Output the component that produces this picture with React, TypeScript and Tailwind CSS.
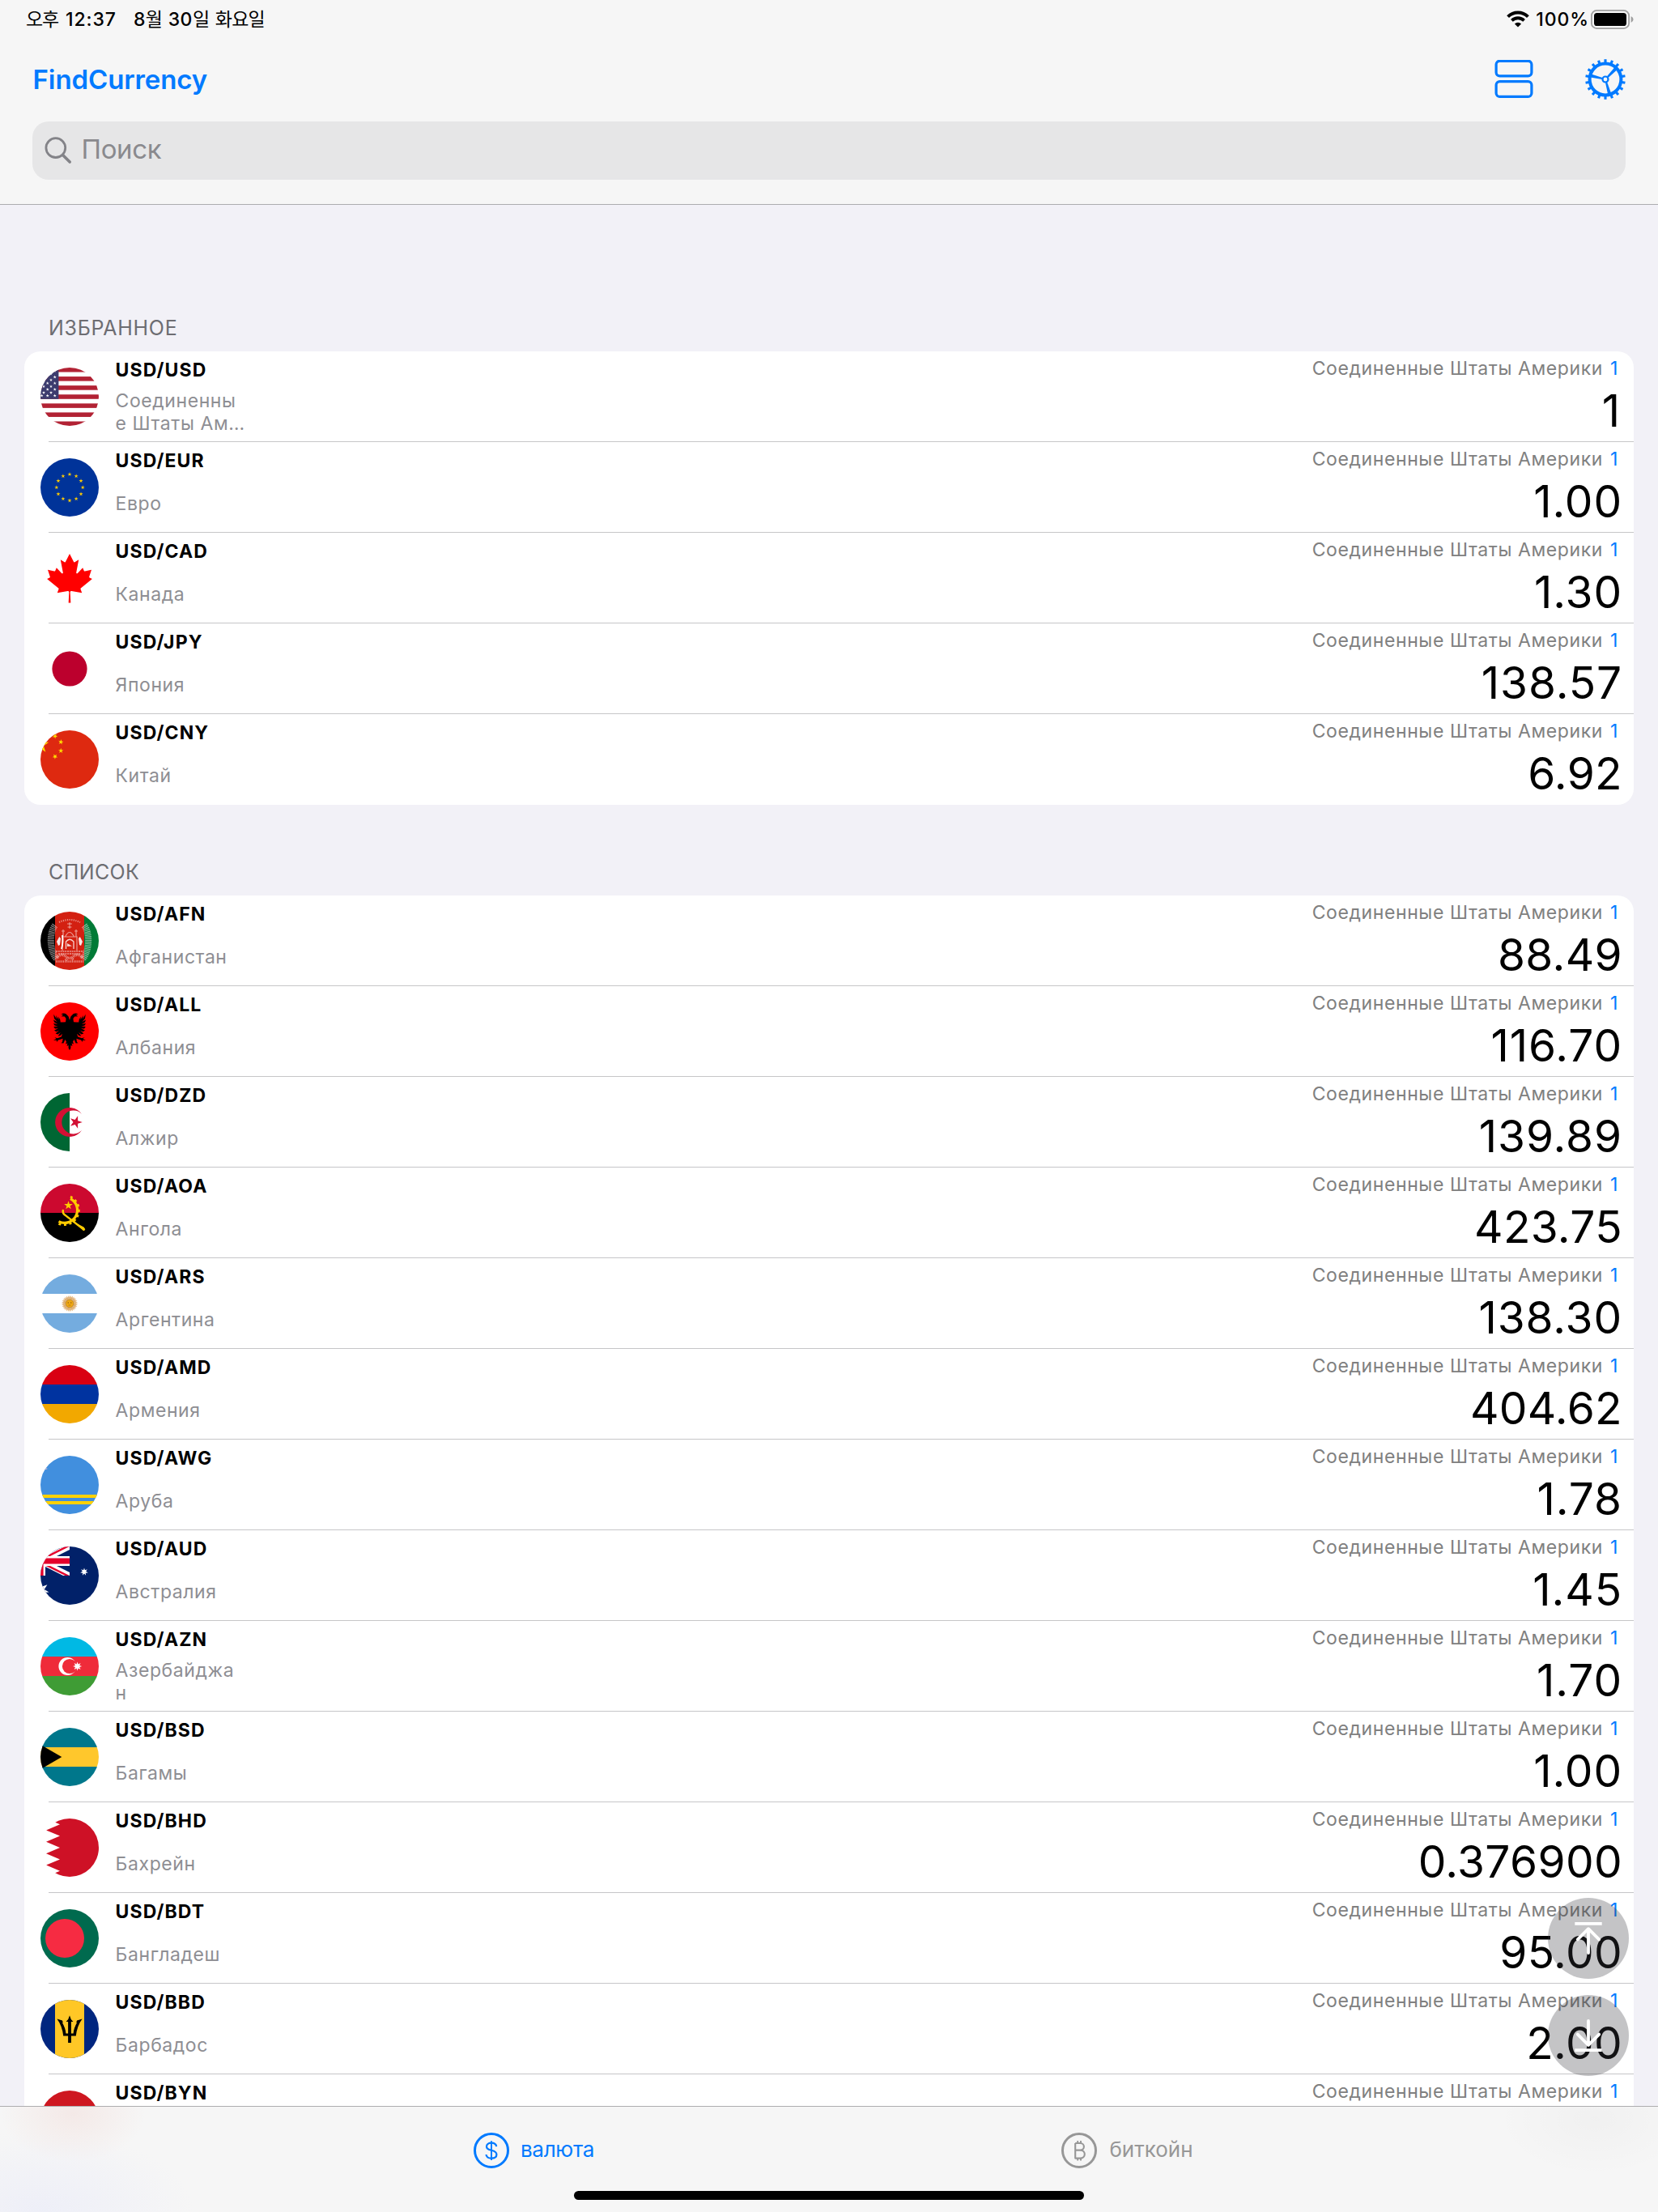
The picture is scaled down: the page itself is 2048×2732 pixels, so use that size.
import React from "react";

function starPoints(cx: number, cy: number, r: number, n = 5, ratio = 0.382, rot = -90) {
  const pts: string[] = [];
  for (let i = 0; i < n * 2; i++) {
    const a = ((rot + (i * 180) / n) * Math.PI) / 180;
    const q = i % 2 === 0 ? r : r * ratio;
    pts.push(`${(cx + q * Math.cos(a)).toFixed(2)},${(cy + q * Math.sin(a)).toFixed(2)}`);
  }
  return pts.join(" ");
}

type StarProps = { x: number; y: number; r: number; n?: number; ratio?: number; rot?: number; fill?: string };

function Star({ x, y, r, n, ratio, rot, fill = "#fff" }: StarProps) {
  return <polygon points={starPoints(x, y, r, n, ratio, rot)} fill={fill} />;
}

function Bands({ colors }: { colors: string[] }) {
  return (
    <>
      {colors.map((c, i) => (
        <rect key={i} x="0" y={i * 24} width="72" height="24" fill={c} />
      ))}
    </>
  );
}

const usStars = [
  [17.7, 11.7], [13, 15.3], [17.7, 19.3], [8.7, 19.3], [13, 23.3], [4, 23.3], [17.7, 27],
  [8.7, 27], [13, 31], [4, 31], [17.7, 34.7], [8.7, 34.7], [1.5, 34.7], [17.7, 4], [13, 7.7],
];

const eagleHalf =
  "M36 22 L34.6 17.5 L31.5 14.2 Q28 12.6 25.6 14.8 L28.2 15.4 L25.6 17.2 L29.8 17.6 L31.6 20 L31 24.5 L25 25.5 L24.2 21 L22 17.6 L22.6 21.5 L19.2 16 L20 20.6 L16.2 14.8 L17 20 L20.6 24 L16 21.6 L17 24.6 L21.2 27 L16 26 L17.4 28.6 L21.6 29.6 L16.2 30 L18 32.4 L22 32.2 L17 34.6 L19.4 36.2 L23 34.8 L18.6 38.6 L21.4 39.4 L24.8 37 L21.6 41.6 L24.4 41.2 L27 38.8 L25.8 42.4 L21 44.2 L17.4 43.2 L19.6 45 L16 47 L19.8 46.8 L20 49 L22 46.6 L25.4 45.6 L27.6 44.8 L27 49 L25.4 50.2 L28.4 50.4 L30.4 46 L32 48.4 L31 51.4 L33.4 50.6 L32.6 54 L34.6 53 L34.6 56.4 L36 59 Z";

const flags: Record<string, React.ReactNode> = {
  USD: (
    <>
      <rect width="72" height="72" fill="#fff" />
      {[0, 2, 4, 6, 8, 10, 12].map((i) => (
        <rect key={i} y={i * 5.54} width="72" height="5.54" fill="#b22234" />
      ))}
      <rect width="22.4" height="38.8" fill="#3c3b6e" />
      {usStars.map(([x, y]) => (
        <Star key={`${x}-${y}`} x={x} y={y} r={2.1} />
      ))}
    </>
  ),
  EUR: (
    <>
      <rect width="72" height="72" fill="#003399" />
      {Array.from({ length: 12 }, (_, i) => (
        <Star
          key={i}
          x={36 + 16.2 * Math.sin((i * Math.PI) / 6)}
          y={36 - 16.2 * Math.cos((i * Math.PI) / 6)}
          r={2.7}
          fill="#ffcc00"
        />
      ))}
    </>
  ),
  CAD: (
    <>
      <rect width="72" height="72" fill="#fff" />
      <g transform="scale(.015) translate(-2400 0)">
        <path
          fill="#f00"
          d="m4890 4430-45-863a95 95 0 0 1 111-98l859 151-116-320a65 65 0 0 1 20-73l941-762-212-99a65 65 0 0 1-34-79l186-572-542 115a65 65 0 0 1-73-38l-105-247-423 454a65 65 0 0 1-111-57l204-1052-327 189a65 65 0 0 1-91-27l-332-652-332 652a65 65 0 0 1-91 27l-327-189 204 1052a65 65 0 0 1-111 57l-423-454-105 247a65 65 0 0 1-73 38l-542-115 186 572a65 65 0 0 1-34 79l-212 99 941 762a65 65 0 0 1 20 73l-116 320 859-151a95 95 0 0 1 111 98l-45 863z"
        />
      </g>
    </>
  ),
  JPY: (
    <>
      <rect width="72" height="72" fill="#fff" />
      <circle cx="36" cy="36" r="21.6" fill="#bc002d" />
    </>
  ),
  CNY: (
    <>
      <rect width="72" height="72" fill="#de2910" />
      <Star x={0} y={18} r={10.8} fill="#ffde00" />
      <Star x={18} y={7.2} r={3.4} rot={15} fill="#ffde00" />
      <Star x={25.2} y={14.4} r={3.4} rot={-80} fill="#ffde00" />
      <Star x={25.2} y={25.2} r={3.4} rot={-90} fill="#ffde00" />
      <Star x={18} y={32.4} r={3.4} rot={20} fill="#ffde00" />
    </>
  ),
  AFN: (
    <>
      <rect width="18" height="72" fill="#000" />
      <rect x="18" width="36" height="72" fill="#d32011" />
      <rect x="54" width="18" height="72" fill="#007a36" />
      <g fill="none" stroke="#fff">
        <path d="M18 17 C11 26 10.5 46 20 59" strokeWidth="8" strokeDasharray="1.2 .9" opacity=".5" />
        <path d="M54 17 C61 26 61.5 46 52 59" strokeWidth="8" strokeDasharray="1.2 .9" opacity=".5" />
        <path d="M23 13 Q36 7 49 13" strokeWidth="2.2" strokeDasharray="1.2 1.4" opacity=".5" />
        <path d="M33 15 h6 M36 13 v8 M33.5 19 h5" strokeWidth=".9" opacity=".6" />
        <path d="M27 48 V31 H45 V48 M30.5 31 Q36 20 41.5 31 M28 31 V22 M44 31 V22 M26 24 h4 M42 24 h4" strokeWidth="1.2" opacity=".55" />
        <path d="M31.5 46 V37 Q36 31.5 41 37 V46" strokeWidth="1.3" opacity=".8" />
        <path d="M27 29 q1.5 8 -1 17" strokeWidth="1.8" />
        <path d="M19 49 H53 M22 52 H50" strokeWidth="1.4" strokeDasharray="2 .8" opacity=".55" />
        <path d="M19 61.5 H53" strokeWidth="2.4" strokeDasharray="1.2 1" opacity=".5" />
        <path d="M20 56.5 Q27 50 33 57 M52 56.5 Q45 50 39 57 M31 60 Q36 54 41 60" strokeWidth="3.2" strokeDasharray="1.2 .8" opacity=".5" />
      </g>
      <path d="M20 37 l3.2 -6 l1.8 2 l-1 8 l-2 1 z M52 37 l-3.2 -6 l-1.8 2 l1 8 l2 1 z" fill="#fff" opacity=".9" />
      <path d="M33 43 v-4 l6 3.5 z" fill="#fff" opacity=".8" />
    </>
  ),
  ALL: (
    <>
      <rect width="72" height="72" fill="#f00" />
      <path d={eagleHalf} />
      <path d={eagleHalf} transform="translate(72 0) scale(-1 1)" />
      <rect x="25" y="24.5" width="22" height="12" />
    </>
  ),
  DZD: (
    <>
      <rect width="72" height="72" fill="#fff" />
      <rect width="36" height="72" fill="#006633" />
      <path d="M51 25.9 A18 18 0 1 0 51 46.1 A14.4 14.4 0 1 1 51 25.9 Z" fill="#d21034" />
      <Star x={43.6} y={36} r={8.2} rot={0} fill="#d21034" />
    </>
  ),
  AOA: (
    <>
      <rect width="72" height="36" fill="#cc092f" />
      <rect y="36" width="72" height="36" fill="#000" />
      <path d="M37 18.5 A15.2 15.2 0 1 1 22.5 46.6" fill="none" stroke="#ffcb00" strokeWidth="3.2" />
      <path d="M37 16 A17.5 17.5 0 1 1 21.5 49" fill="none" stroke="#ffcb00" strokeWidth="2.6" strokeDasharray="3 3.6" />
      <path d="M27.5 32.5 Q26 36 28.6 38.4 L50 54.6 L53 58 L55.4 56.2 L53.4 53.6 Q36 45 29.5 37 Z" fill="#ffcb00" />
      <path d="M27.8 33 Q27.2 36.4 30 38.4 L53.6 56.8" fill="none" stroke="#ffcb00" strokeWidth="2.4" strokeLinecap="round" />
      <Star x={34.5} y={26.8} r={5.6} fill="#ffcb00" />
    </>
  ),
  ARS: (
    <>
      <Bands colors={["#74acdf", "#ffffff", "#74acdf"]} />
      {[0, 1, 2, 3].map((k) => (
        <Star key={k} x={36} y={36} r={10.2} n={8} ratio={0.45} rot={k * 11.25} fill={k % 2 ? "#e0b67e" : "#dfa968"} />
      ))}
      <circle cx="36" cy="36" r="4.8" fill="#f0a811" stroke="#b07a1c" strokeWidth=".6" />
      <circle cx="34.2" cy="35" r=".7" fill="#85540f" />
      <circle cx="37.8" cy="35" r=".7" fill="#85540f" />
      <path d="M34.4 38 h3.2" stroke="#a5701a" strokeWidth=".7" />
    </>
  ),
  AMD: <Bands colors={["#d90012", "#0033a0", "#f2a800"]} />,
  AWG: (
    <>
      <rect width="72" height="72" fill="#418fde" />
      <rect y="48" width="72" height="4" fill="#ffd100" />
      <rect y="56" width="72" height="4" fill="#ffd100" />
      <path d="M4 14.6 L9 16 L4 17.4 Z" fill="#f4c9d2" />
    </>
  ),
  AUD: (
    <>
      <rect width="72" height="72" fill="#012169" />
      <svg x="-36" y="0" width="72" height="36" viewBox="0 0 72 36">
        <path d="M0 0 L72 36 M72 0 L0 36" stroke="#fff" strokeWidth="7.2" />
        <path d="M36 18 L72 36 M36 18 L0 0" stroke="#e4002b" strokeWidth="2.4" transform="translate(0 1.4)" />
        <path d="M36 18 L72 0 M36 18 L0 36" stroke="#e4002b" strokeWidth="2.4" transform="translate(0 -1.4)" />
        <path d="M36 0 V36 M0 18 H72" stroke="#fff" strokeWidth="12" />
        <path d="M36 0 V36 M0 18 H72" stroke="#e4002b" strokeWidth="7.2" />
      </svg>
      <Star x={0} y={54} r={10.8} n={7} ratio={0.45} />
      <Star x={54} y={31.3} r={4.9} n={7} ratio={0.45} />
    </>
  ),
  AZN: (
    <>
      <Bands colors={["#00b9e4", "#ef2b3a", "#3f9c35"]} />
      <circle cx="33.4" cy="36" r="11" fill="#fff" />
      <circle cx="36" cy="36" r="9.1" fill="#ef2b3a" />
      <Star x={45.6} y={36} r={5.6} n={8} ratio={0.5} rot={0} />
    </>
  ),
  BSD: (
    <>
      <Bands colors={["#00778b", "#ffc72c", "#00778b"]} />
      <path d="M-36 0 L26.3 36 L-36 72 Z" />
    </>
  ),
  BHD: (
    <>
      <rect width="72" height="72" fill="#fff" />
      <path
        d="M72 0 H7 L24 7.2 L7 14.4 L24 21.6 L7 28.8 L24 36 L7 43.2 L24 50.4 L7 57.6 L24 64.8 L7 72 H72 Z"
        fill="#ce1126"
      />
    </>
  ),
  BDT: (
    <>
      <rect width="72" height="72" fill="#006a4e" />
      <circle cx="30" cy="36" r="24" fill="#f62b42" />
    </>
  ),
  BBD: (
    <>
      <rect width="72" height="72" fill="#00267f" />
      <rect x="18" width="36" height="72" fill="#ffc726" />
      <path d="M34.1 53 V44.6 H28.2 Q26.9 32 20.4 23.4 L27 25.6 L27.9 28.4 L26.6 27.6 Q30.9 35 31.4 41.4 H34.1 V27 H31.6 Q35 24 36 19.2 Q37 24 40.4 27 H37.9 V41.4 H40.6 Q41.1 35 45.4 27.6 L44.1 28.4 L45 25.6 L51.6 23.4 Q45.1 32 43.8 44.6 H37.9 V53 Z" />
    </>
  ),
  BYN: <rect width="72" height="72" fill="#ce1720" />,
};

function Flag({ code }: { code: string }) {
  return (
    <div className="mt-5 ml-5 size-[72px] shrink-0 overflow-hidden rounded-full">
      <svg viewBox="0 0 72 72" className="block size-full">
        {flags[code]}
      </svg>
    </div>
  );
}

type Item = { code: string; name?: string[]; value?: string };

const favorites: Item[] = [
  { code: "USD", name: ["Соединенны", "е Штаты Ам…"], value: "1" },
  { code: "EUR", name: ["Евро"], value: "1.00" },
  { code: "CAD", name: ["Канада"], value: "1.30" },
  { code: "JPY", name: ["Япония"], value: "138.57" },
  { code: "CNY", name: ["Китай"], value: "6.92" },
];

const list: Item[] = [
  { code: "AFN", name: ["Афганистан"], value: "88.49" },
  { code: "ALL", name: ["Албания"], value: "116.70" },
  { code: "DZD", name: ["Алжир"], value: "139.89" },
  { code: "AOA", name: ["Ангола"], value: "423.75" },
  { code: "ARS", name: ["Аргентина"], value: "138.30" },
  { code: "AMD", name: ["Армения"], value: "404.62" },
  { code: "AWG", name: ["Аруба"], value: "1.78" },
  { code: "AUD", name: ["Австралия"], value: "1.45" },
  { code: "AZN", name: ["Азербайджа", "н"], value: "1.70" },
  { code: "BSD", name: ["Багамы"], value: "1.00" },
  { code: "BHD", name: ["Бахрейн"], value: "0.376900" },
  { code: "BDT", name: ["Бангладеш"], value: "95.00" },
  { code: "BBD", name: ["Барбадос"], value: "2.00" },
  { code: "BYN" },
];

function valueSpacing(value: string) {
  if (value === "1") return "mr-[3px] tracking-[0.9px]";
  if (value.startsWith("1")) return "mr-px tracking-[0.9px]";
  return "mr-px tracking-[0.35px]";
}

function Row({ item, last }: { item: Item; last: boolean }) {
  return (
    <div className="flex h-[112px] flex-col">
      <div className="flex h-[111px]">
        <Flag code={item.code} />
        <div className="ml-[20.6px] flex flex-col pt-2">
          <div className="text-[23px] leading-[30px] font-bold tracking-[1.1px] text-black">USD/{item.code}</div>
          {item.name && (
            <div
              className={
                (item.name.length === 1 ? "mt-[10px] " : "mt-[9px] ") +
                "flex h-14 flex-col justify-center text-[23px] leading-7 tracking-[0.57px] whitespace-nowrap text-[#8e8e93]"
              }
            >
              {item.name.map((line) => (
                <span key={line}>{line}</span>
              ))}
            </div>
          )}
        </div>
        <div className="ml-auto flex flex-col items-end pt-1.5 pr-[13px]">
          <div className="mr-[6px] text-[23px] leading-[30px] tracking-[0.6px] whitespace-nowrap text-[#808080]">
            Соединенные Штаты Америки <span className="ml-[2px] text-[#007aff]">1</span>
          </div>
          {item.value && (
            <div className={"mt-[7px] text-[55px] leading-[60px] text-black " + valueSpacing(item.value)}>
              {item.value}
            </div>
          )}
        </div>
      </div>
      {!last && <div className="ml-[30px] h-px bg-[#c6c6c8]" />}
    </div>
  );
}

function Group({ items }: { items: Item[] }) {
  return (
    <div className="mx-[30px] shrink-0 overflow-hidden rounded-[20px] bg-white">
      {items.map((it, i) => (
        <Row key={it.code} item={it} last={i === items.length - 1} />
      ))}
    </div>
  );
}

function StatusBar() {
  return (
    <div className="flex h-[47px] items-center pr-[30px] pl-8 text-[23px] leading-6 font-medium text-black">
      <span className="flex items-center font-['Inter','Noto_Sans_CJK_KR',sans-serif]">
        <span className="font-normal tracking-[-1.2px]">오후</span>
        <span className="ml-[9px] tracking-[0.95px]">12:37</span>
        <span className="ml-[21px] tracking-[0.4px]">8</span>
        <span className="font-normal tracking-[-1.2px]">월</span>
        <span className="ml-2 tracking-[0.4px]">30</span>
        <span className="font-normal tracking-[-1.2px]">일</span>
        <span className="ml-2 font-normal tracking-[-0.8px]">화요일</span>
      </span>
      <svg className="ml-auto" width="28" height="21" viewBox="0 0 28 21">
        <path d="M1.6 7.6 A17.6 17.6 0 0 1 26.4 7.6" fill="none" stroke="#000" strokeWidth="4" />
        <path d="M6.4 12.4 A10.8 10.8 0 0 1 21.6 12.4" fill="none" stroke="#000" strokeWidth="3.8" />
        <path d="M14 20.6 L9.9 16.4 A5.9 5.9 0 0 1 18.1 16.4 Z" fill="#000" />
      </svg>
      <span className="ml-2 tracking-[0.9px]">100%</span>
      <svg className="ml-[2px]" width="53" height="24" viewBox="0 0 53 24">
        <rect x="0.9" y="0.9" width="46.2" height="22.2" rx="6.4" fill="none" stroke="#a0a0a0" strokeWidth="1.8" />
        <rect x="4" y="4" width="40" height="16" rx="3.6" fill="#000" />
        <path d="M49.6 8 Q52.6 9.4 52.6 12 Q52.6 14.6 49.6 16 Z" fill="#a0a0a0" />
      </svg>
    </div>
  );
}

function GearIcon() {
  return (
    <svg width="50" height="50" viewBox="-25 -25 50 50">
      <g fill="none" stroke="#007aff">
        <circle r="19.4" strokeWidth="4" />
        {Array.from({ length: 18 }, (_, i) => (
          <path key={i} d="M0 -20.5 V-24.8" strokeWidth="3.1" transform={`rotate(${i * 20})`} />
        ))}
        <circle r="3.5" strokeWidth="2.2" />
        {[44, 164, 284].map((a) => (
          <path key={a} d="M-1.1 -4 L-2.1 -18.5 H2.1 L1.1 -4 Z" fill="#007aff" stroke="none" transform={`rotate(${a})`} />
        ))}
      </g>
    </svg>
  );
}

function NavBar() {
  return (
    <header className="flex h-[253px] shrink-0 flex-col border-b border-[#adadaf] bg-[#f6f6f6]">
      <StatusBar />
      <div className="flex h-[101px] items-center pr-10 pl-[40.6px]">
        <h1 className="text-[33px] leading-10 font-semibold tracking-[-0.12px] text-[#007aff]">FindCurrency</h1>
        <svg className="ml-auto" width="48" height="48" viewBox="0 0 48 48" fill="none" stroke="#007aff" strokeWidth="3.2">
          <rect x="2.1" y="1.3" width="43.8" height="18.6" rx="4.4" />
          <rect x="2.1" y="26.7" width="43.8" height="18.6" rx="4.4" />
        </svg>
        <div className="ml-16">
          <GearIcon />
        </div>
      </div>
      <div className="mx-10 mt-0.5 flex h-[72px] items-center rounded-[20px] bg-[#e6e6e7] pl-[15px]">
        <svg width="34" height="34" viewBox="0 0 34 34" fill="none" stroke="#838388">
          <circle cx="13.8" cy="13.6" r="11.9" strokeWidth="2.8" />
          <path d="M22.6 22.4 L31.2 31" strokeWidth="3.6" strokeLinecap="round" />
        </svg>
        <span className="ml-[11.6px] pb-1 text-[33px] leading-10 tracking-[-0.4px] text-[#8a8a8e]">Поиск</span>
      </div>
    </header>
  );
}

function FloatingButton({ down }: { down?: boolean }) {
  return (
    <div className="flex size-[100px] items-center justify-center rounded-full bg-[rgba(60,60,67,0.3)]">
      <svg
        width="100"
        height="100"
        viewBox="0 0 100 100"
        fill="none"
        stroke="#fff"
        strokeWidth="3.8"
        className={down ? "-scale-y-100" : ""}
      >
        <path d="M33.3 31.9 H66.7" />
        <path d="M50 68 V39 M36.8 51.4 L50 38.2 L63.2 51.4" strokeLinecap="round" strokeLinejoin="round" />
      </svg>
    </div>
  );
}

function TabBar() {
  return (
    <footer className="flex h-[131px] shrink-0 flex-col border-t border-[#adadaf] bg-[#f6f6f6] bg-[radial-gradient(ellipse_90px_60px_at_90px_8px,rgba(225,120,100,0.1),transparent),radial-gradient(ellipse_190px_100px_at_50px_130px,rgba(225,228,250,0.4),transparent),radial-gradient(ellipse_120px_70px_at_1970px_15px,rgba(0,0,0,0.025),transparent)]">
      <div className="mr-[289px] ml-[293px] grid h-[106px] grid-cols-2">
        <div className="flex items-center justify-center text-[#007aff]">
          <svg width="44" height="44" viewBox="0 0 44 44" fill="none" stroke="currentColor" className="translate-y-px">
            <circle cx="22" cy="22" r="20.5" strokeWidth="3" />
            <path d="M22 10.2 V34" strokeWidth="1.9" />
            <path
              d="M28.2 17.2 C27.8 14.2 25.2 12.6 22 12.6 C18.6 12.6 16 14.4 16 17.2 C16 20.2 18.6 21 22 21.8 C25.8 22.7 28.4 23.8 28.4 27 C28.4 30.2 25.6 31.7 22 31.7 C18.4 31.7 15.8 30 15.5 27"
              strokeWidth="2.2"
            />
          </svg>
          <span className="ml-3.5 text-[26px] leading-8 tracking-[-0.3px]">валюта</span>
        </div>
        <div className="flex items-center justify-center text-[#979797]">
          <svg width="44" height="44" viewBox="0 0 44 44" fill="none" stroke="currentColor" className="translate-y-px">
            <circle cx="22" cy="22" r="20.5" strokeWidth="3" />
            <path d="M17.2 13 H23.4 C29.4 13 29.4 21.6 23.4 21.6 H17.2 M23.4 21.6 C30.6 21.6 30.6 31.6 23.4 31.6 H17.2 V13" strokeWidth="2.1" strokeLinejoin="round" />
            <path d="M20.2 10 V13 M24 10 V13 M20.2 31.6 V34.6 M24 31.6 V34.6" strokeWidth="1.9" />
          </svg>
          <span className="ml-[15px] text-[26px] leading-8">биткойн</span>
        </div>
      </div>
      <div className="mx-auto mt-[-2px] h-[11px] w-[630px] rounded-full bg-black" />
    </footer>
  );
}

export default function App() {
  return (
    <div className="relative flex h-[2732px] w-full flex-col overflow-hidden bg-[#f2f1f7] font-['Inter','Noto_Sans_CJK_KR',sans-serif]">
      <NavBar />
      <main className="flex min-h-0 flex-1 flex-col overflow-hidden">
        <h2 className="flex h-[181px] shrink-0 items-end pb-[14px] pl-[60px] text-[25px] leading-[30px] tracking-[0.7px] text-[#6d6d72]">
          ИЗБРАННОЕ
        </h2>
        <Group items={favorites} />
        <h2 className="flex h-[112px] shrink-0 items-end pb-[14px] pl-[60px] text-[25px] leading-[30px] tracking-[0.4px] text-[#6d6d72]">
          СПИСОК
        </h2>
        <Group items={list} />
      </main>
      <TabBar />
      <div className="absolute right-9 bottom-[168px] flex flex-col gap-5">
        <FloatingButton />
        <FloatingButton down />
      </div>
    </div>
  );
}
